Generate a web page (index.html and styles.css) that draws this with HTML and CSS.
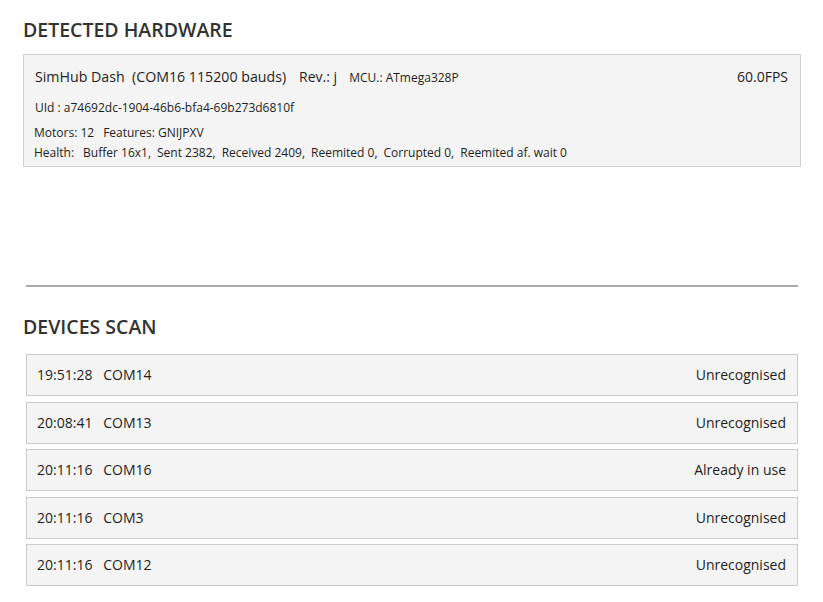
FILE: index.html
```html
<!DOCTYPE html>
<html>
<head>
<meta charset="utf-8">
<link rel="stylesheet" href="styles.css">
</head>
<body>
<div class="page">
  <h1 class="section-title title-hw">DETECTED HARDWARE</h1>
  <div class="hw-box">
    <div class="hw-top">
      <div class="hw-name">
        <span class="hw-title">SimHub Dash&nbsp; (COM16 115200 bauds)</span>
        <span class="hw-rev">Rev.: j</span>
        <span class="hw-mcu">MCU.: ATmega328P</span>
      </div>
      <span class="hw-fps">60.0FPS</span>
    </div>
    <div class="hw-uid">UId : a74692dc-1904-46b6-bfa4-69b273d6810f</div>
    <div class="hw-motors">Motors: 12<span class="gap">Features: GNIJPXV</span></div>
    <div class="hw-health">Health:<span class="gap">Buffer 16x1,</span><span class="item">Sent 2382,</span><span class="item">Received 2409,</span><span class="item">Reemited 0,</span><span class="item">Corrupted 0,</span><span class="item">Reemited af. wait 0</span></div>
  </div>
  <div class="divider"></div>
  <h1 class="section-title title-scan">DEVICES SCAN</h1>
  <div class="scan-list">
    <div class="scan-row"><span>19:51:28&nbsp;&nbsp; COM14</span><span>Unrecognised</span></div>
    <div class="scan-row"><span>20:08:41&nbsp;&nbsp; COM13</span><span>Unrecognised</span></div>
    <div class="scan-row"><span>20:11:16&nbsp;&nbsp; COM16</span><span>Already in use</span></div>
    <div class="scan-row"><span>20:11:16&nbsp;&nbsp; COM3</span><span>Unrecognised</span></div>
    <div class="scan-row"><span>20:11:16&nbsp;&nbsp; COM12</span><span>Unrecognised</span></div>
  </div>
</div>
</body>
</html>
```
FILE: styles.css
```css
html, body {
  margin: 0;
  padding: 0;
  background: #ffffff;
}
body {
  font-family: "Open Sans", "Noto Sans", sans-serif;
  color: #1e1e1e;
}
.page {
  padding: 18px 22px 0 23px;
}
.section-title {
  margin: 0;
  font-size: 19.5px;
  line-height: 24px;
  font-weight: 600;
  color: #333333;
}
.title-hw {
  margin-bottom: 12px;
}
.hw-box {
  background: #f4f4f4;
  border: 1px solid #cfcfcf;
  padding: 12px 12px 5px 11px;
}
.hw-top {
  display: flex;
  justify-content: space-between;
  align-items: baseline;
  font-size: 14px;
  line-height: 20px;
}
.hw-name {
  display: flex;
  align-items: baseline;
}
.hw-title {
  font-size: 14.2px;
}
.hw-rev {
  margin-left: 13px;
}
.hw-mcu {
  margin-left: 12px;
  font-size: 12px;
}
.hw-uid, .hw-motors, .hw-health {
  font-size: 12px;
  line-height: 16px;
}
.hw-uid {
  margin-top: 12px;
}
.hw-motors {
  margin-top: 9px;
  margin-left: -1px;
}
.hw-health {
  margin-top: 4px;
  margin-left: -1px;
}
.gap {
  margin-left: 9px;
}
.item {
  margin-left: 6px;
}
.divider {
  height: 2px;
  background: #aaaaaa;
  margin: 118px 3px 0 3px;
}
.title-scan {
  margin-top: 28px;
  margin-bottom: 15px;
}
.scan-list {
  display: flex;
  flex-direction: column;
  gap: 5.5px;
  margin: 0 3px;
}
.scan-row {
  height: 42px;
  box-sizing: border-box;
  border: 1px solid #cacaca;
  background: #f4f4f4;
  display: flex;
  justify-content: space-between;
  align-items: center;
  padding: 0 11px 0 10px;
  font-size: 14px;
  line-height: 20px;
}
```
